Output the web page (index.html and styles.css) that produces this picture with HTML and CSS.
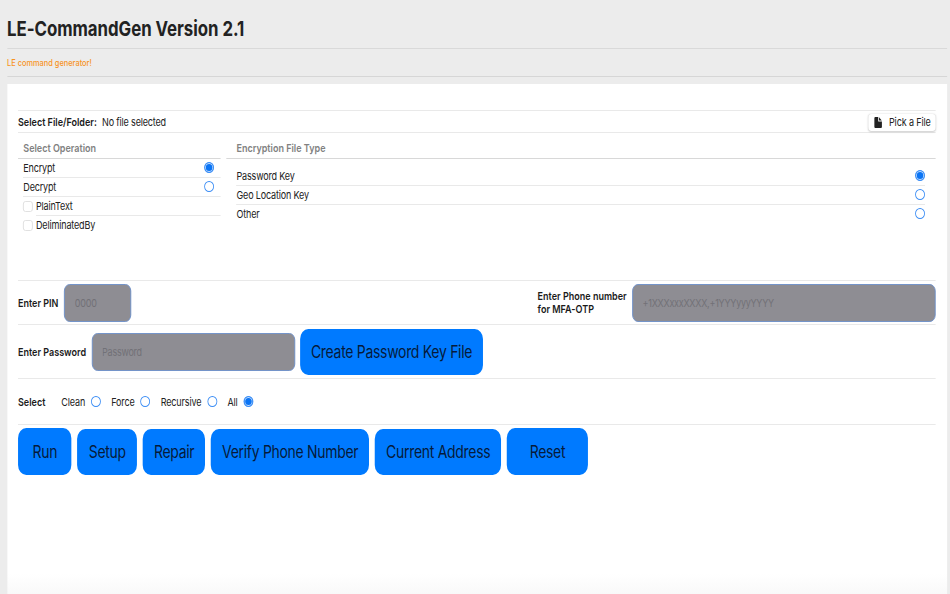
FILE: index.html
```html
<!DOCTYPE html>
<html lang="en">
<head>
    <meta charset="UTF-8">
    <meta name="viewport" content="width=device-width, initial-scale=1.0">
    <title>LE-CommandGen</title>
    <link rel="stylesheet" href="styles.css">
</head>
<body>
    <div class="app">
        <h1>LE-CommandGen Version 2.1</h1>
        <p class="tagline">LE command generator!</p>
        <main class="panel">
            <div class="row file-row">
                <b class="file-label">Select File/Folder:</b>
                <span class="file-name">No file selected</span>
                <button class="pick">
                    <svg width="10" height="11" viewBox="0 0 10 11"><path d="M1.5 0H5v4.5h4.5v5A1.3 1.3 0 0 1 8.2 11H1.5A1.3 1.3 0 0 1 .2 9.7V1.3A1.3 1.3 0 0 1 1.5 0zM6 .3l3.3 3.3H6z" fill="#222"/></svg>
                    <span>Pick a File</span>
                </button>
            </div>
            <div class="options">
                <section class="operation">
                    <h2>Select Operation</h2>
                    <label class="item">Encrypt<input type="radio" name="op" checked></label>
                    <label class="item">Decrypt<input type="radio" name="op"></label>
                    <label class="item check"><input type="checkbox"><span>PlainText</span></label>
                    <label class="item check"><input type="checkbox"><span>DeliminatedBy</span></label>
                </section>
                <section class="file-type">
                    <h2>Encryption File Type</h2>
                    <label class="item">Password Key<input type="radio" name="type" checked></label>
                    <label class="item">Geo Location Key<input type="radio" name="type"></label>
                    <label class="item">Other<input type="radio" name="type"></label>
                </section>
            </div>
            <div class="row pin-row">
                <b>Enter PIN</b>
                <input class="field pin" type="text" placeholder="0000">
                <b class="phone-label">Enter Phone number<br>for MFA-OTP</b>
                <input class="field phone" type="text" placeholder="+1XXXxxxXXXX,+1YYYyyyYYYY">
            </div>
            <div class="row password-row">
                <b>Enter Password</b>
                <input class="field password" type="text" placeholder="Password">
                <button class="action create">Create Password Key File</button>
            </div>
            <div class="row select-row">
                <b>Select</b>
                <label>Clean<input type="radio" name="mode"></label>
                <label>Force<input type="radio" name="mode"></label>
                <label>Recursive<input type="radio" name="mode"></label>
                <label>All<input type="radio" name="mode" checked></label>
            </div>
            <div class="actions">
                <button class="action run">Run</button>
                <button class="action setup">Setup</button>
                <button class="action repair">Repair</button>
                <button class="action verify">Verify Phone Number</button>
                <button class="action address">Current Address</button>
                <button class="action reset">Reset</button>
            </div>
        </main>
    </div>
</body>
</html>
```
FILE: styles.css
```css
* {
    box-sizing: border-box;
}
html {
    overflow: hidden;
    background-color: #ececec;
}
body {
    margin: 0;
    width: 950px;
    height: 594px;
    overflow: hidden;
    font-family: Inter, "Liberation Sans", sans-serif;
    font-size: 11px;
    letter-spacing: -0.15px;
    color: #222;
}
/* narrow look: everything is laid out wide, then squeezed to 82% */
.app {
    display: flex;
    flex-direction: column;
    width: 1158px;
    height: 594px;
    padding: 0 3.5px 0 8.5px;
    transform: scaleX(0.82);
    transform-origin: 0 0;
}
h1 {
    margin: 0;
    height: 49px;
    padding-top: 16px;
    font-size: 20.5px;
    line-height: 26px;
    letter-spacing: -0.03px;
    border-bottom: 1px solid #d9d9d9;
}
.tagline {
    margin: 0 0 7px;
    height: 28px;
    font-size: 9px;
    font-weight: 500;
    line-height: 28px;
    letter-spacing: 0.03px;
    color: #f7931e;
    border-bottom: 1px solid #d6d6d6;
}
.panel {
    flex: 1;
    padding: 26px 13.4px 0;
    background: linear-gradient(#fff 0, #fff 490px, #f9f9f9 510px);
}
.row {
    display: flex;
    align-items: center;
    border-bottom: 1px solid #e9e9e9;
}
b {
    font-weight: 600;
    letter-spacing: 0.01px;
    color: #1a1a1a;
}
button {
    border: none;
    padding: 0;
    font-family: inherit;
    letter-spacing: inherit;
}
.file-row {
    height: 23px;
    padding-top: 1px;
    border-top: 1px solid #e9e9e9;
}
.file-name {
    margin-left: 6.5px;
    letter-spacing: -0.2px;
}
.pick {
    display: flex;
    align-items: center;
    gap: 8px;
    width: 82px;
    height: 17px;
    margin-left: auto;
    padding-left: 7px;
    font-size: 11px;
    color: #222;
    background-color: #fff;
    border-radius: 4px;
    box-shadow: 0 0.5px 2px rgba(0, 0, 0, 0.2);
}
.options {
    display: flex;
    gap: 7px;
    height: 148px;
    border-bottom: 1px solid #e9e9e9;
}
h2 {
    margin: 0;
    height: 26px;
    padding: 3px 6.5px 0;
    font-size: 11px;
    font-weight: 600;
    line-height: 24px;
    letter-spacing: 0;
    color: #818181;
    border-bottom: 1px solid #d8d8d8;
}
.operation {
    width: 247px;
}
.file-type {
    flex: 1;
}
.file-type h2 {
    margin-bottom: 8px;
    padding-left: 12.5px;
}
.item {
    display: flex;
    align-items: center;
    justify-content: space-between;
    height: 19px;
    margin-left: 6.5px;
    padding-right: 7.5px;
    letter-spacing: -0.2px;
    border-bottom: 1px solid #e9e9e9;
}
.file-type .item {
    margin: 0 13px 0 12.5px;
    padding-right: 0;
}
.item:last-child {
    border-bottom-color: transparent;
}
input[type="radio"] {
    appearance: none;
    width: 12px;
    height: 11px;
    margin: 0;
    border: 1px solid #3b8df5;
    border-radius: 50%;
    background-color: #fff;
}
input[type="radio"]:checked {
    background-color: #0a74f5;
    box-shadow: inset 0 0 0 1px #c5defc;
}
.item input[type="radio"] {
    margin-bottom: 1px;
}
.check {
    justify-content: flex-start;
    gap: 3.5px;
    padding: 0;
    border: none;
}
.check span {
    flex: 1;
    height: 19px;
    line-height: 19px;
    border-bottom: 1px solid #e9e9e9;
}
.check:last-child span {
    border-bottom-color: transparent;
}
input[type="checkbox"] {
    appearance: none;
    width: 12px;
    height: 11px;
    margin: 0;
    border: 1px solid #dedede;
    border-radius: 3px;
}
.pin-row {
    height: 44px;
    padding-top: 1px;
}
.field {
    height: 38px;
    padding: 0 12px;
    font-family: inherit;
    font-size: 11px;
    letter-spacing: -0.3px;
    background-color: #8e8d93;
    border: 1px solid #6b8ec9;
    border-radius: 7px;
}
.field::placeholder {
    color: #727177;
    opacity: 1;
}
.pin {
    width: 82px;
    margin-left: 7px;
}
.phone-label {
    width: 109px;
    margin-left: auto;
    line-height: 13px;
    white-space: nowrap;
}
.phone {
    width: 370.5px;
    margin-left: 6px;
}
.password-row {
    height: 54px;
}
.password {
    width: 248px;
    margin: 0 6.5px;
}
.action {
    height: 46px;
    font-size: 17px;
    letter-spacing: -0.33px;
    white-space: nowrap;
    color: #061a3a;
    background-color: #007aff;
    border-radius: 10px;
}
.create {
    width: 223px;
}
.select-row {
    height: 46px;
}
.select-row label {
    display: flex;
    align-items: center;
    gap: 7px;
    margin-right: 12.7px;
}
.select-row b {
    margin-right: 19.5px;
}
.actions {
    display: flex;
    align-items: center;
    gap: 7px;
    padding-top: 3px;
}
.run {
    width: 65.5px;
    height: 47px;
}
.setup {
    width: 73px;
}
.repair {
    width: 76px;
}
.verify {
    width: 193px;
}
.address {
    width: 154px;
}
.reset {
    width: 98.5px;
    height: 47px;
}
```
